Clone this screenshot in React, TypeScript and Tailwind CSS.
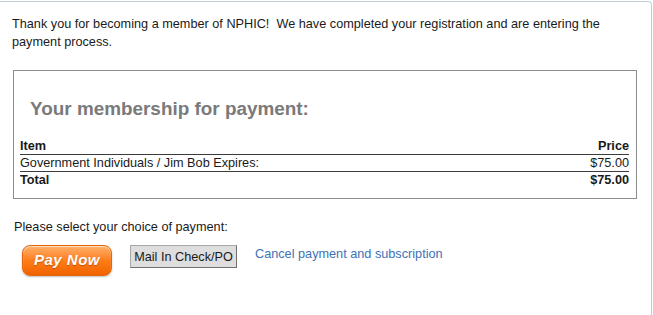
export default function App() {
  return (
    <div className="w-[653px] h-[315px] overflow-hidden bg-white font-['Liberation_Sans',Arial,sans-serif] text-[12.7px] text-[#1a1a1a]">
      <div className="mt-px w-[652px] h-[314px] border-t border-r border-[#c3ccd6] rounded-tr-[4px] pl-[12px] pt-[13px]">
        {/* Intro */}
        <p className="w-[616px] leading-[18px]">
          Thank you for becoming a member of NPHIC!&nbsp; We have completed your registration and are entering the payment process.
        </p>

        {/* Membership summary box */}
        <div className="mt-[19px] ml-px w-[624px] border border-[#8c8c8c] pl-[6px] pr-[7px] pb-[10px]">
          <h2 className="mt-[27px] mb-[18px] pl-[10px] text-[18.9px] leading-[22px] font-bold text-[#7a7a7a]">
            Your membership for payment:
          </h2>

          <div className="flex justify-between border-b border-[#3c3c3c] font-bold leading-[16px]">
            <span>Item</span>
            <span>Price</span>
          </div>
          <div className="flex justify-between border-b border-[#3c3c3c] leading-[16px]">
            <span>Government Individuals / Jim Bob Expires:</span>
            <span>$75.00</span>
          </div>
          <div className="flex justify-between font-bold leading-[16px]">
            <span>Total</span>
            <span>$75.00</span>
          </div>
        </div>

        {/* Payment choice */}
        <p className="mt-[19px] ml-[2px] leading-[18px]">Please select your choice of payment:</p>

        <div className="mt-[9px] flex items-start">
          <button className="ml-[10px] w-[90px] h-[31px] rounded-[8px] border border-[#e5670c] bg-linear-to-b from-[#ffb066] via-[#ff7d16] to-[#f06200] shadow-[inset_0_1px_1px_rgba(255,255,255,0.6),0_1px_2px_rgba(0,0,0,0.25)] text-white text-[15px] font-bold italic tracking-[0.5px] [text-shadow:0_1px_1px_rgba(120,40,0,0.45)]">
            Pay Now
          </button>
          <button className="ml-[18px] w-[107px] h-[23px] border border-[#a8a8a8] border-r-[#707070] border-b-[#707070] bg-[#dedede] text-[12.7px] text-[#1a1a1a] leading-[20px] whitespace-nowrap">
            Mail In Check/PO
          </button>
          <a href="#" className="ml-[18px] leading-[18px] text-[#3d72b8]">
            Cancel payment and subscription
          </a>
        </div>
      </div>
    </div>
  )
}
